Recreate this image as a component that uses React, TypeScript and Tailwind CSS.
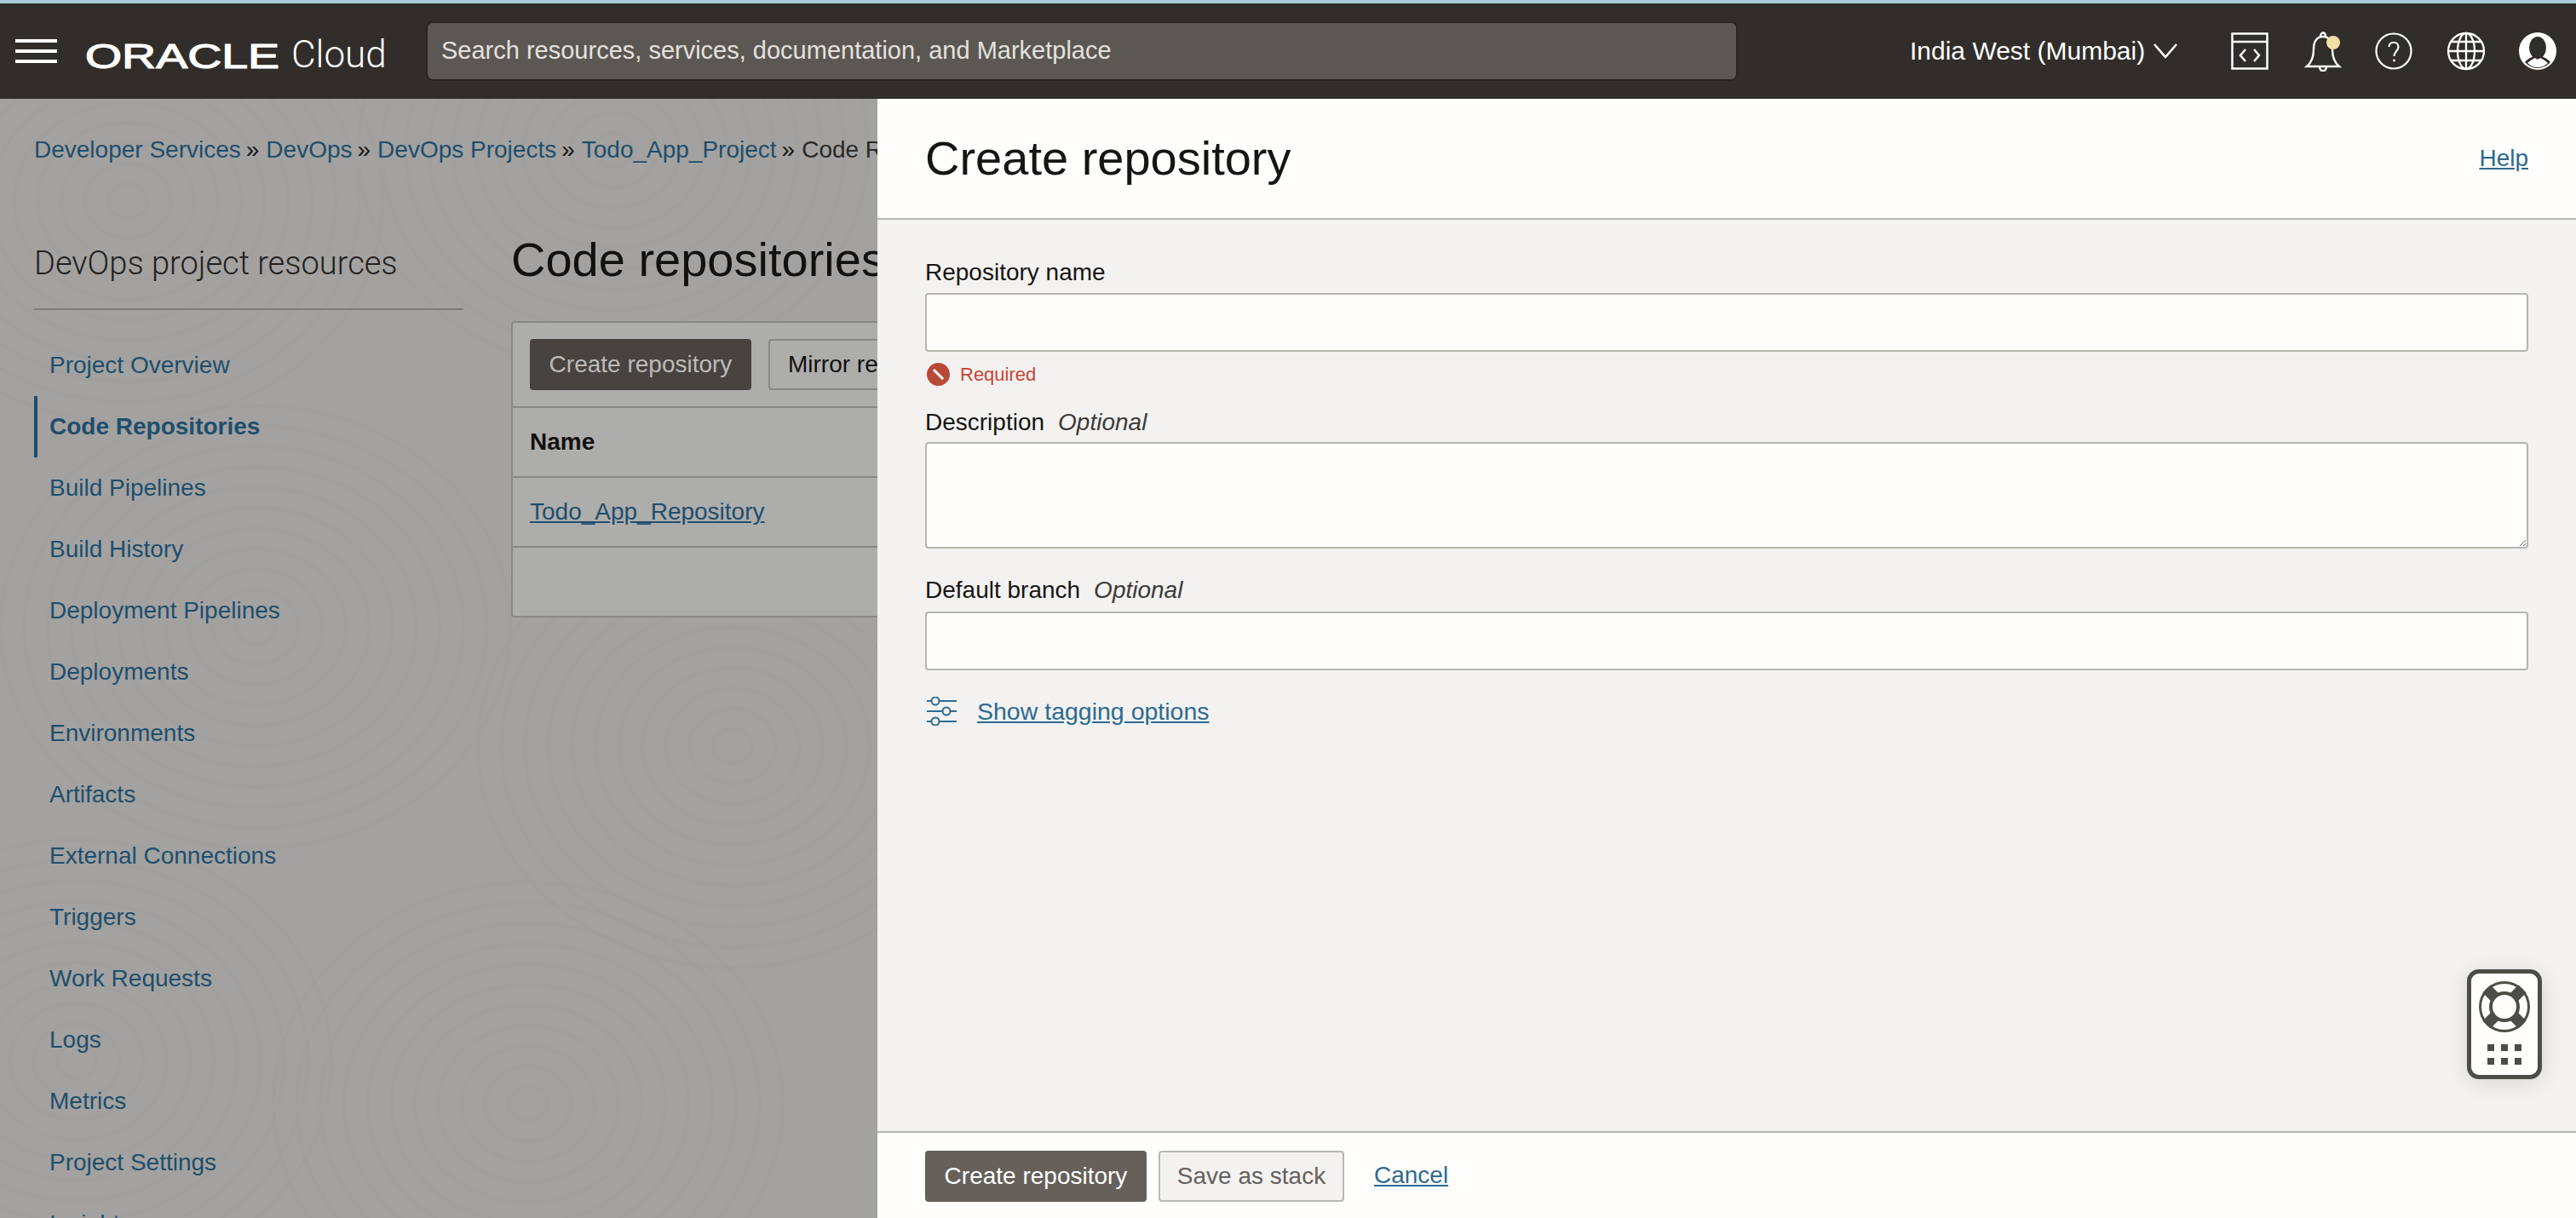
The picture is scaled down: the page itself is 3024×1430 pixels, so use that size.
import React from 'react';

const navItems = [
  'Project Overview',
  'Code Repositories',
  'Build Pipelines',
  'Build History',
  'Deployment Pipelines',
  'Deployments',
  'Environments',
  'Artifacts',
  'External Connections',
  'Triggers',
  'Work Requests',
  'Logs',
  'Metrics',
  'Project Settings',
  'Insights',
];

const crumbs = ['Developer Services', 'DevOps', 'DevOps Projects', 'Todo_App_Project'];

const swirls = [
  { cx: 150, cy: 120 },
  { cx: 720, cy: 60 },
  { cx: 860, cy: 760 },
  { cx: 300, cy: 620 },
  { cx: 620, cy: 1180 },
  { cx: 90, cy: 1130 },
];

const BackdropPattern: React.FC = () => (
  <svg className="absolute inset-0 h-full w-full" viewBox="0 0 1030 1314" preserveAspectRatio="none">
    {swirls.map((s) =>
      [20, 44, 68, 92, 116, 140, 164, 188, 212, 236, 260].map((r) => (
        <ellipse
          key={`${s.cx}-${r}`}
          cx={s.cx}
          cy={s.cy}
          rx={r * 1.15}
          ry={r}
          fill="none"
          stroke="#8f8e8c"
          strokeOpacity="0.07"
          strokeWidth="4"
        />
      )),
    )}
  </svg>
);

const TopBar: React.FC = () => (
  <header className="flex h-[112px] shrink-0 items-center bg-[#312d2a] text-white">
    <div className="ml-[18px] flex h-[28px] w-[49px] flex-col justify-between">
      <span className="h-[4px] bg-white" />
      <span className="h-[4px] bg-white" />
      <span className="h-[4px] bg-white" />
    </div>
    <svg className="mt-[10px] ml-[33px] h-[44px] w-[232px]" viewBox="0 0 232 44">
      <text
        x="0"
        y="37"
        fontFamily="'Liberation Sans', sans-serif"
        fontWeight="400"
        fontSize="41"
        fill="#fff"
        stroke="#fff"
        strokeWidth="1.2"
        textLength="228"
        lengthAdjust="spacingAndGlyphs"
      >
        ORACLE
      </text>
    </svg>
    <span className="mt-[8px] ml-[10px] w-[110px] font-['Roboto',sans-serif] text-[44px] leading-none font-light">Cloud</span>
    <div className="ml-[50px] flex h-[66px] w-[1536px] items-center rounded-[6px] bg-[#5b5753] pl-[16px] text-[29px] text-[#e4e2df] shadow-[0_0_0_2px_#282522]">
      Search resources, services, documentation, and Marketplace
    </div>
    <div className="ml-[204px] text-[30px] leading-none">India West (Mumbai)</div>
    <svg className="ml-[10px] h-[18px] w-[28px]" viewBox="0 0 28 18" fill="none" stroke="#fff" strokeWidth="2.6">
      <path d="M1 1l13 15L27 1" />
    </svg>
    <svg className="ml-[63px] h-[44px] w-[44px]" viewBox="0 0 44 44" fill="none" stroke="#fff" strokeWidth="2.5">
      <rect x="1.5" y="1.5" width="41" height="41" />
      <path d="M1.5 11h41" />
      <path d="M17 20l-6 7 6 7M27 20l6 7-6 7" />
    </svg>
    <svg className="ml-[42px] h-[48px] w-[44px]" viewBox="0 0 44 48" fill="none" stroke="#fff" strokeWidth="2.4">
      <path d="M22 7c-8 0-11 7-11 15 0 8-2 15-8 20h38c-6-5-8-12-8-20 0-8-3-15-11-15z" />
      <path d="M19 7c0-6 6-6 6 0" />
      <path d="M18 42c0 7 8 7 8 0" />
      <ellipse cx="34" cy="14" rx="8" ry="8" fill="#f2dfa6" stroke="none" />
    </svg>
    <svg className="ml-[39px] h-[44px] w-[44px]" viewBox="0 0 44 44" fill="none" stroke="#fff" strokeWidth="2.2">
      <circle cx="22" cy="22" r="20.5" />
      <path d="M16.5 17c0-7 11-7 11 0 0 5-5 5-5 11" />
      <circle cx="22.5" cy="33" r="1.4" fill="#fff" stroke="none" />
    </svg>
    <svg className="ml-[40px] h-[46px] w-[46px]" viewBox="0 0 46 46" fill="none" stroke="#fff" strokeWidth="2.3">
      <circle cx="23" cy="23" r="21" />
      <ellipse cx="23" cy="23" rx="10" ry="21" />
      <path d="M23 2v42M5 12h36M2 23h42M5 34h36" />
    </svg>
    <svg className="ml-[39px] h-[44px] w-[44px]" viewBox="0 0 44 44">
      <circle cx="22" cy="22" r="22" fill="#fff" />
      <ellipse cx="22" cy="18" rx="10" ry="13" fill="#312d2a" />
      <path d="M7 35c4-5 9-6 11-7h8c2 1 7 2 11 7-4 4-9 7-15 7s-11-3-15-7z" fill="#312d2a" />
      <path d="M10 36c3-3 7-5 9-6 2 2 4 2 6 0 2 1 6 3 9 6-3 3-7 5-12 5s-9-2-12-5z" fill="#fff" />
    </svg>
  </header>
);

const BackgroundPage: React.FC = () => (
  <div className="relative h-full w-[1030px] shrink-0 overflow-hidden bg-[#a3a2a0] pl-[40px] text-[28px]">
    <BackdropPattern />
    <div className="relative">
      <nav className="flex h-[76px] items-end whitespace-nowrap leading-[32px]">
        {crumbs.map((c) => (
          <span key={c} className="mr-[8px] flex items-center text-[#1e4e6d]">
            {c}
            <span className="ml-[6px] text-[#161513]">»</span>
          </span>
        ))}
        <span className="text-[#2b2a28]">Code Repositories</span>
      </nav>
      <div className="flex">
        <aside className="w-[504px] shrink-0">
          <h2 className="mt-[95px] h-[75px] font-['Roboto',sans-serif] text-[38px] leading-[44px] font-light text-[#22211f]">
            DevOps project resources
          </h2>
          <div className="h-[2px] bg-[#7f7e7c]" />
          <ul className="mt-[29px]">
            {navItems.map((item) =>
              item === 'Code Repositories' ? (
                <li key={item} className="flex h-[72px] items-center border-l-[4px] border-[#1e4e6d] pl-[14px] font-bold text-[#1e4e6d]">
                  {item}
                </li>
              ) : (
                <li key={item} className="flex h-[72px] items-center pl-[18px] text-[#1e4e6d]">
                  {item}
                </li>
              ),
            )}
          </ul>
        </aside>
        <main className="ml-[56px] w-[600px] shrink-0">
          <h1 className="mt-[81px] h-[74px] text-[56px] leading-[64px] whitespace-nowrap text-[#111110]">Code repositories</h1>
          <div className="mt-[30px] h-[348px] rounded-[4px] border-2 border-[#8a8886] bg-[#adadac]">
            <div className="flex h-[100px] items-start gap-[20px] overflow-hidden border-b-2 border-[#8a8886] pt-[19px] pl-[20px]">
              <button className="h-[60px] w-[260px] shrink-0 rounded-[4px] bg-[#47433f] text-[#bdbbb9]">Create repository</button>
              <button className="h-[60px] w-[280px] shrink-0 rounded-[4px] border-2 border-[#8a8886] pl-[21px] text-left text-[#111110]">Mirror repository</button>
            </div>
            <div className="flex h-[82px] items-center border-b-2 border-[#8a8886] pl-[20px] font-bold text-[#111110]">Name</div>
            <div className="flex h-[82px] items-center border-b-2 border-[#8a8886] pl-[20px] text-[#1e4e6d] underline">
              Todo_App_Repository
            </div>
          </div>
        </main>
      </div>
    </div>
  </div>
);

const Field: React.FC<{ label: string; optional?: boolean; children: React.ReactNode }> = ({ label, optional, children }) => (
  <div>
    <label className="flex h-[32px] items-center text-[28px] text-[#161513]">
      {label}
      {optional && <em className="ml-[16px] text-[#3c3a38]">Optional</em>}
    </label>
    {children}
  </div>
);

const inputClass = 'mt-[8px] block h-[69px] w-full rounded-[4px] border-2 border-[#b8b3ae] bg-[#fffefd] outline-none';

const CreateDrawer: React.FC = () => (
  <section className="flex h-full min-w-0 flex-1 flex-col bg-[#f3f2f1] shadow-[-1px_0_0_#8f8e8c]">
    <div className="flex h-[142px] shrink-0 items-center justify-between border-b-2 border-[#bcb6b1] bg-[#fffefd] pr-[56px] pl-[56px]">
      <h1 className="text-[56px] leading-none text-[#161513]">Create repository</h1>
      <a className="text-[28px] text-[#2d6a91] underline">Help</a>
    </div>
    <form className="min-h-0 flex-1 px-[56px] pt-[46px]">
      <Field label="Repository name">
        <input className={inputClass} />
      </Field>
      <div className="mt-[12px] flex h-[28px] items-center gap-[12px] pl-[2px] text-[22px] text-[#c74634]">
        <svg className="h-[27px] w-[27px]" viewBox="0 0 27 27">
          <circle cx="13.5" cy="13.5" r="13.5" fill="#b94a36" />
          <path d="M8 8l11 11" stroke="#fff" strokeWidth="3" />
        </svg>
        Required
      </div>
      <div className="mt-[27px]">
        <Field label="Description" optional>
          <textarea className="mt-[7px] block h-[125px] w-full rounded-[4px] border-2 border-[#b8b3ae] bg-[#fffefd] outline-none" />
        </Field>
      </div>
      <div className="mt-[33px]">
        <Field label="Default branch" optional>
          <input className="mt-[9px] block h-[69px] w-full rounded-[4px] border-2 border-[#b8b3ae] bg-[#fffefd] outline-none" />
        </Field>
      </div>
      <div className="mt-[30px] flex h-[36px] items-center gap-[24px] pl-[2px] text-[28.5px] text-[#2d6a91]">
        <svg className="h-[34px] w-[35px]" viewBox="0 0 35 34" fill="none" stroke="#2d6a91" strokeWidth="2">
          <path d="M0 5h5M15 5h20M0 17h18M28 17h7M0 29h5M15 29h20" />
          <circle cx="10" cy="5" r="4.5" />
          <circle cx="23" cy="17" r="4.5" />
          <circle cx="10" cy="29" r="4.5" />
        </svg>
        <a className="underline">Show tagging options</a>
      </div>
    </form>
    <div className="flex h-[102px] shrink-0 items-start border-t-2 border-[#bcb6b1] bg-[#fffefd] pt-[21px] pl-[56px] text-[28px]">
      <button className="h-[60px] w-[260px] rounded-[4px] bg-[#665f5a] text-white">Create repository</button>
      <button className="ml-[14px] h-[60px] w-[218px] rounded-[4px] border-2 border-[#bcb6b1] bg-[#f3f2f1] text-[#665f5b]">Save as stack</button>
      <a className="mt-[8px] ml-[35px] text-[#2d6a91] underline">Cancel</a>
    </div>
  </section>
);

const HelpWidget: React.FC = () => (
  <div className="absolute top-[1138px] left-[2896px] flex h-[129px] w-[88px] flex-col items-center rounded-[14px] border-[5px] border-[#4f4c47] bg-[#fffefd] shadow-[0_4px_24px_rgba(0,0,0,0.12)]">
    <svg className="mt-[9px] h-[60px] w-[60px]" viewBox="0 0 60 60">
      <circle cx="30" cy="30" r="30" fill="#4f4c47" />
      <circle cx="30" cy="30" r="22.5" fill="none" stroke="#fffefd" strokeWidth="9" />
      <path d="M9 9l42 42M51 9L9 51" stroke="#4f4c47" strokeWidth="13" />
      <circle cx="30" cy="30" r="17" fill="#4f4c47" />
      <circle cx="30" cy="30" r="14" fill="#fffefd" />
    </svg>
    <div className="mt-[14px] grid grid-cols-3 gap-[8px]">
      {[0, 1, 2, 3, 4, 5].map((i) => (
        <span key={i} className="h-[8px] w-[8px] bg-[#4f4c47]" />
      ))}
    </div>
  </div>
);

const App: React.FC = () => (
  <div className="relative flex h-[1430px] w-[3024px] flex-col overflow-hidden font-['Liberation_Sans',sans-serif]">
    <div className="h-[4px] shrink-0 bg-[#a9cdd6]" />
    <TopBar />
    <div className="flex min-h-0 flex-1">
      <BackgroundPage />
      <CreateDrawer />
    </div>
    <HelpWidget />
  </div>
);

export default App;
